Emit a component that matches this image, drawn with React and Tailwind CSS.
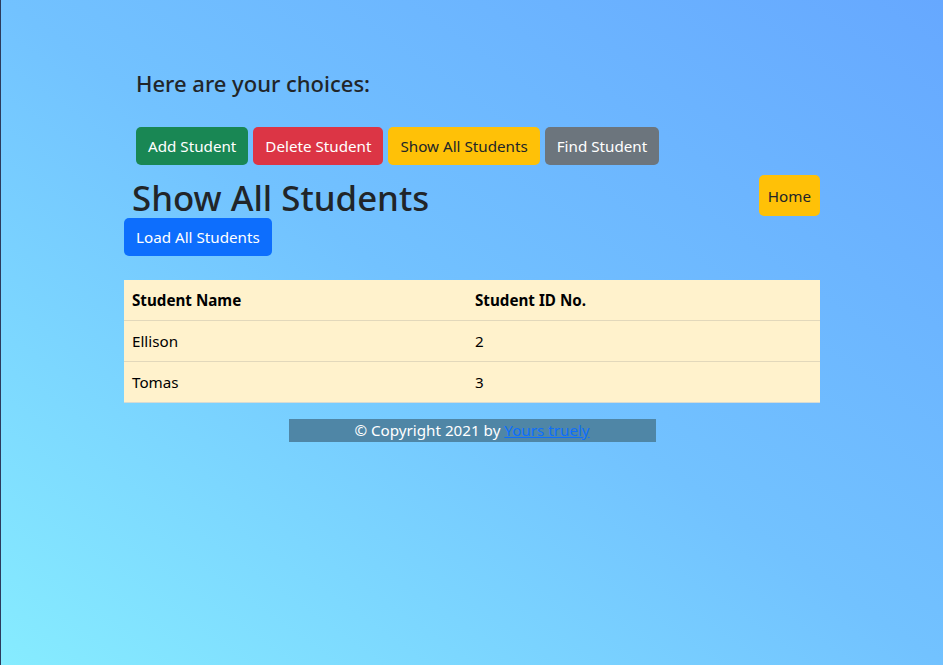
import React from "react";

const students = [
  { name: "Ellison", id: 2 },
  { name: "Tomas", id: 3 },
];

const App = () => {
  return (
    <div
      className="min-h-screen w-full border-l border-[#2c3b5c] bg-[linear-gradient(to_top_right,#86ecff_0%,#72c2ff_50%,#66a8ff_100%)] text-[15.2px] leading-[24px] text-[#212529]"
      style={{ fontFamily: '"Noto Sans", "Open Sans", sans-serif' }}
    >
      <div className="mx-auto w-[720px] px-3">
        {/* --- CHOICES --- */}
        <div className="px-3 pt-[70px]">
          <h4 className="text-[22px] font-medium leading-[1.2]">Here are your choices:</h4>
          <div className="mt-[31px] flex gap-[5px]">
            <button className="h-[38px] rounded-[5px] bg-[#198754] px-3 text-white">Add Student</button>
            <button className="h-[38px] rounded-[5px] bg-[#dc3545] px-3 text-white">Delete Student</button>
            <button className="h-[38px] rounded-[5px] bg-[#ffc107] px-3 text-[#212529]">Show All Students</button>
            <button className="h-[38px] rounded-[5px] bg-[#6c757d] px-3 text-white">Find Student</button>
          </div>
        </div>

        {/* --- HEADER --- */}
        <div className="flex items-start justify-between">
          <h1 className="mt-[12px] pl-2 text-[34.8px] font-medium leading-[1.2]">Show All Students</h1>
          <button className="mt-[10px] h-[41px] rounded-[5px] bg-[#ffc107] px-[9px] text-[#212529]">Home</button>
        </div>
        <button className="-mt-[1px] h-[38px] rounded-[5px] bg-[#0d6efd] px-3 text-white">Load All Students</button>

        {/* --- TABLE --- */}
        <table className="mt-[24px] w-full table-fixed border-collapse bg-[#fff2cc] text-left text-black">
          <thead>
            <tr className="border-b border-[#e2d8bb]">
              <th className="h-[40px] w-[343px] px-2 font-bold">Student Name</th>
              <th className="h-[40px] px-2 font-bold">Student ID No.</th>
            </tr>
          </thead>
          <tbody>
            {students.map((s, i) => (
              <tr key={s.id} className={i < students.length - 1 ? "border-b border-[#e2d8bb]" : "border-b border-[#d6dbd4]"}>
                <td className="h-[41px] px-2">{s.name}</td>
                <td className="h-[41px] px-2">{s.id}</td>
              </tr>
            ))}
          </tbody>
        </table>

        {/* --- FOOTER --- */}
        <div className="mt-[16px] flex justify-center">
          <p className="h-[23px] w-[367px] bg-[#4f86a6] text-center leading-[23px] text-white">
            © Copyright 2021 by{" "}
            <a href="#" className="text-[#0d6efd] underline">
              Yours truely
            </a>
          </p>
        </div>
      </div>
    </div>
  );
};

export default App;
